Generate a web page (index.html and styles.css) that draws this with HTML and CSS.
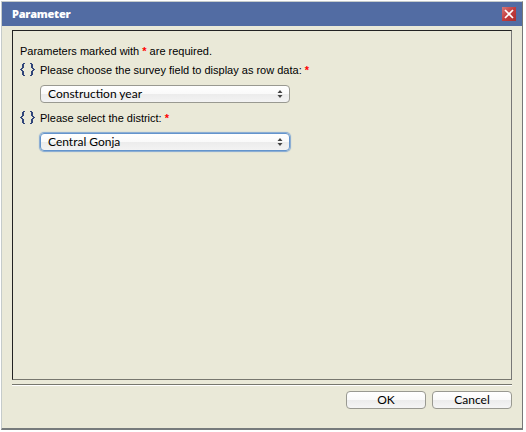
FILE: index.html
```html
<!DOCTYPE html>
<html lang="en">
<head>
<meta charset="utf-8">
<title>Parameter</title>
<link rel="stylesheet" href="styles.css">
</head>
<body>
<div class="dialog">
  <header class="titlebar">
    <h1 class="title">Parameter</h1>
    <button class="close" aria-label="Close">
      <svg width="14" height="14" viewBox="0 0 14 14"><path d="M3 3L11 11M11 3L3 11" stroke="#fff" stroke-width="1.7"/></svg>
    </button>
  </header>
  <main class="panel">
    <p class="note">Parameters marked with <b class="req">*</b> are required.</p>
    <div class="label-row">
      <svg class="braces" width="16" height="14" viewBox="0 0 16 14"><path d="M3 0h2v1H3zM2 1h2v4H2zM1 5h2v1H1zM0 6h2v1H0zM1 7h2v1H1zM2 8h2v4H2zM3 12h2v1H3zM10 0h2v1h-2zM11 1h2v4h-2zM12 5h2v1h-2zM13 6h2v1h-2zM12 7h2v1h-2zM11 8h2v4h-2zM10 12h2v1h-2z"/></svg>
      <span class="label">Please choose the survey field to display as row data: <b class="req">*</b></span>
    </div>
    <div class="select">
      <span>Construction year</span>
      <svg width="6" height="8" viewBox="0 0 6 8"><path d="M3 0L5.500 3H.5zM3 8L5.500 5H.5z"/></svg>
    </div>
    <div class="label-row second">
      <svg class="braces" width="16" height="14" viewBox="0 0 16 14"><path d="M3 0h2v1H3zM2 1h2v4H2zM1 5h2v1H1zM0 6h2v1H0zM1 7h2v1H1zM2 8h2v4H2zM3 12h2v1H3zM10 0h2v1h-2zM11 1h2v4h-2zM12 5h2v1h-2zM13 6h2v1h-2zM12 7h2v1h-2zM11 8h2v4h-2zM10 12h2v1h-2z"/></svg>
      <span class="label">Please select the district: <b class="req">*</b></span>
    </div>
    <div class="select focused">
      <span>Central Gonja</span>
      <svg width="6" height="8" viewBox="0 0 6 8"><path d="M3 0L5.500 3H.5zM3 8L5.500 5H.5z"/></svg>
    </div>
  </main>
  <footer class="actions">
    <button class="btn">OK</button>
    <button class="btn">Cancel</button>
  </footer>
</div>
</body>
</html>
```
FILE: styles.css
```css
* { box-sizing: border-box; }
body {
  margin: 0;
  padding: 1px;
  background: #fff;
  font-family: "Liberation Sans", Arial, sans-serif;
  font-size: 11px;
  color: #000;
}
.dialog {
  width: 522px;
  height: 429px;
  border: 1px solid #c5cbcb;
  border-right-color: #777;
  border-bottom: 2px solid #777b7c;
  background: #eae9d8;
}
.titlebar {
  display: flex;
  justify-content: space-between;
  align-items: center;
  height: 24px;
  padding: 0 6px 0 10px;
  background: #526ca3;
}
.title {
  margin: 0;
  font: 800 11px/14px "Open Sans", sans-serif;
  letter-spacing: -0.25px;
  color: #fff;
}
.close {
  width: 14px;
  height: 14px;
  padding: 0;
  border: 0;
  background: linear-gradient(135deg, #d77878, #c33c3d 50%, #a82e30);
}
.close svg { display: block; }
.panel {
  width: 500px;
  height: 350px;
  margin: 4px 0 0 10px;
  padding: 13px 7px;
  border: 1px solid #222;
  border-right-color: #777;
  border-bottom-color: #77776e;
}
.note { margin: 0; line-height: 14px; }
.req { color: #f00; }
.label-row {
  display: flex;
  align-items: center;
  gap: 4px;
  height: 14px;
  margin-top: 5px;
}
.label-row.second { margin-top: 8px; }
.braces { fill: #31467a; }
.select {
  display: flex;
  align-items: center;
  justify-content: space-between;
  width: 250px;
  height: 18px;
  margin: 8px 0 0 20px;
  padding: 0 6px 0 7px;
  border: 1px solid #999991;
  border-radius: 4px;
  background: linear-gradient(#fff, #fafafa 48%, #ececec 52%, #f3f3f3);
  font: 12px/16px Lato, sans-serif;
}
.select svg { fill: #444; }
.focused {
  border-color: #6494cc;
  box-shadow: 0 0 1px 1px #83a8d3;
}
.actions {
  display: flex;
  justify-content: flex-end;
  gap: 6px;
  width: 500px;
  margin: 4px 0 0 10px;
  padding-top: 6px;
  border-top: 1px solid #77776e;
  box-shadow: inset 0 1px #fff;
}
.btn {
  width: 80px;
  height: 18px;
  padding: 0;
  border: 1px solid #999991;
  border-radius: 4px;
  background: linear-gradient(#fff, #fafafa 48%, #ececec 52%, #f5f5f5);
  font: 12px/16px Lato, sans-serif;
  color: #000;
}
```
